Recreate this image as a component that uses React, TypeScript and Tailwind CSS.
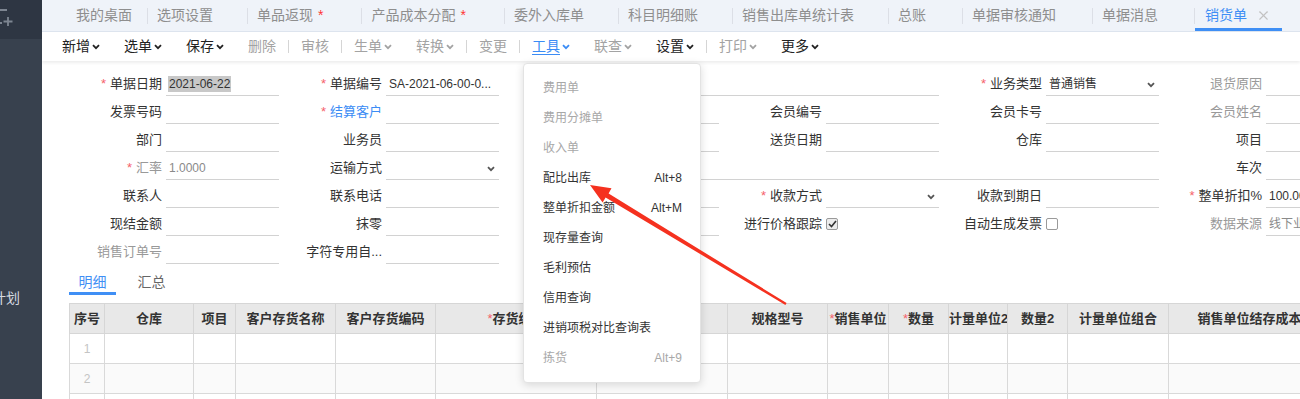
import { X } from 'lucide-react'

type Tab = { name: string; dirty?: boolean }

const tabs: Tab[] = [
  { name: '选项设置' },
  { name: '单品返现', dirty: true },
  { name: '产品成本分配', dirty: true },
  { name: '委外入库单' },
  { name: '科目明细账' },
  { name: '销售出库单统计表' },
  { name: '总账' },
  { name: '单据审核通知' },
  { name: '单据消息' },
]

type Tool = { name: string; tone: 'dark' | 'gray' | 'blue'; menu?: boolean } | 'sep'

const tools: Tool[] = [
  { name: '新增', tone: 'dark', menu: true },
  { name: '选单', tone: 'dark', menu: true },
  { name: '保存', tone: 'dark', menu: true },
  { name: '删除', tone: 'gray' },
  'sep',
  { name: '审核', tone: 'gray' },
  'sep',
  { name: '生单', tone: 'gray', menu: true },
  { name: '转换', tone: 'gray', menu: true },
  'sep',
  { name: '变更', tone: 'gray' },
  'sep',
  { name: '工具', tone: 'blue', menu: true },
  { name: '联查', tone: 'gray', menu: true },
  { name: '设置', tone: 'dark', menu: true },
  'sep',
  { name: '打印', tone: 'gray', menu: true },
  { name: '更多', tone: 'dark', menu: true },
]

type Cell = {
  label?: string
  star?: boolean
  tone?: 'gray' | 'blue'
  value?: string
  valueGray?: boolean
  mark?: boolean
  select?: boolean
  check?: 'on' | 'off'
  span?: 1 | 2 | 3
  blank?: boolean
}

const rows: Cell[][] = [
  [
    { label: '单据日期', star: true, value: '2021-06-22', mark: true },
    { label: '单据编号', star: true, value: 'SA-2021-06-00-0...' },
    { span: 2 },
    { label: '业务类型', star: true, value: '普通销售', select: true },
    { label: '退货原因', tone: 'gray' },
  ],
  [
    { label: '发票号码' },
    { label: '结算客户', star: true, tone: 'blue' },
    {},
    { label: '会员编号' },
    { label: '会员卡号' },
    { label: '会员姓名', tone: 'gray' },
  ],
  [
    { label: '部门' },
    { label: '业务员' },
    {},
    { label: '送货日期' },
    { label: '仓库' },
    { label: '项目' },
  ],
  [
    { label: '汇率', star: true, tone: 'gray', value: '1.0000', valueGray: true },
    { label: '运输方式', select: true },
    { span: 3 },
    { label: '车次' },
  ],
  [
    { label: '联系人' },
    { label: '联系电话' },
    {},
    { label: '收款方式', star: true, select: true },
    { label: '收款到期日' },
    { label: '整单折扣%', star: true, value: '100.00' },
  ],
  [
    { label: '现结金额' },
    { label: '抹零' },
    {},
    { label: '进行价格跟踪', check: 'on' },
    { label: '自动生成发票', check: 'off' },
    { label: '数据来源', tone: 'gray', value: '线下业务', valueGray: true },
  ],
  [{ label: '销售订单号', tone: 'gray' }, { label: '字符专用自...' }, { blank: true }],
]

const cellWidth = { 1: 'w-[220px]', 2: 'w-[440px]', 3: 'w-[660px]' }
const inputWidth = { 1: 'w-[113px]', 2: 'w-[333px]', 3: 'w-[553px]' }

const columns = [
  { w: 'w-[35px]', t: '序号' },
  { w: 'w-[89px]', t: '仓库' },
  { w: 'w-[42px]', t: '项目' },
  { w: 'w-[100px]', t: '客户存货名称' },
  { w: 'w-[100px]', t: '客户存货编码' },
  { w: 'w-[161px]', t: '存货编码', star: true },
  { w: 'w-[131px]', t: '存货名称' },
  { w: 'w-[100px]', t: '规格型号' },
  { w: 'w-[61px]', t: '销售单位', star: true },
  { w: 'w-[60px]', t: '数量', star: true },
  { w: 'w-[59px]', t: '计量单位2' },
  { w: 'w-[60px]', t: '数量2' },
  { w: 'w-[101px]', t: '计量单位组合' },
  { w: 'w-[162px]', t: '销售单位结存成本' },
]

const menu = [
  { t: '费用单', off: true },
  { t: '费用分摊单', off: true },
  { t: '收入单', off: true },
  { t: '配比出库', key: 'Alt+8' },
  { t: '整单折扣金额', key: 'Alt+M' },
  { t: '现存量查询' },
  { t: '毛利预估' },
  { t: '信用查询' },
  { t: '进销项税对比查询表' },
  { t: '拣货', key: 'Alt+9', off: true },
]

function Caret({ className = '' }: { className?: string }) {
  return (
    <svg width="8" height="6" viewBox="0 0 8 6" className={className}>
      <polyline points="1,1.2 4,4.2 7,1.2" fill="none" stroke="currentColor" strokeWidth="1.8" />
    </svg>
  )
}

function Sidebar() {
  return (
    <div className="w-[42px] shrink-0 flex flex-col bg-[#38414e] overflow-hidden">
      <div className="h-[39px] bg-[#2e3643] flex items-start">
        <svg width="22" height="22" viewBox="0 0 22 22" className="-ml-[8px] mt-[7px] text-[#7d8591]">
          <path d="M15 3H4v13h6" fill="none" stroke="currentColor" strokeWidth="1.8" />
          <path d="M16 10v9M11.5 14.5h9" fill="none" stroke="currentColor" strokeWidth="1.8" />
        </svg>
      </div>
      <div className="pt-[249px] -ml-[8px] text-[14px] leading-[20px] text-[#d6dae0] whitespace-nowrap">计划</div>
    </div>
  )
}

function TabBar() {
  return (
    <div className="h-[32px] shrink-0 flex items-stretch pl-[24px] bg-[#eff3f9] border-b border-[#dde4ee] text-[14px] text-[#8e8e8e] whitespace-nowrap">
      <div className="flex items-center pl-[10px] pr-[15px]">我的桌面</div>
      {tabs.map((tab, i) => (
        <div key={tab.name} className="flex items-center">
          <span className="w-px h-[16px] bg-[#dcdfe6]" />
          <span className={`pl-[9px] ${tab.dirty ? 'pr-[38px]' : i > 5 ? 'pr-[36px]' : 'pr-[34px]'}`}>
            {tab.name}
            {tab.dirty && <span className="ml-[5px] text-[#f33]">*</span>}
          </span>
        </div>
      ))}
      <div className="flex items-center">
        <span className="w-px h-[16px] bg-[#dcdfe6]" />
        <span className="h-full flex items-center pl-[10px] pr-[11px] border-b-[3px] border-[#3f8ff5] pt-[3px] text-[#3f8ff5]">
          销货单
          <X size={15} strokeWidth={1.7} className="ml-[9px] text-[#c2c2c2]" />
        </span>
      </div>
    </div>
  )
}

function Toolbar() {
  return (
    <div className="relative z-10 h-[29px] shrink-0 flex items-center pl-[8px] bg-white shadow-[0_2px_3px_rgba(0,0,0,0.07)] text-[14px] whitespace-nowrap">
      {tools.map((tool, i) =>
        tool === 'sep' ? (
          <span key={i} className="w-px h-[13px] bg-[#d5d5d5]" />
        ) : (
          <span
            key={tool.name}
            className={`flex items-center gap-[2px] px-3 ${
              tool.tone === 'dark' ? 'text-[#222]' : tool.tone === 'blue' ? 'text-[#3b8cf5]' : 'text-[#a3a3a3]'
            }`}
          >
            <span className={tool.tone === 'blue' ? 'underline underline-offset-[3px]' : ''}>{tool.name}</span>
            {tool.menu && <Caret />}
          </span>
        ),
      )}
    </div>
  )
}

function Field({ cell }: { cell: Cell }) {
  const span = cell.span ?? 1
  if (cell.blank) return null
  const labelTone = cell.tone === 'gray' ? 'text-[#999]' : cell.tone === 'blue' ? 'text-[#3b8cf5]' : 'text-[#333]'
  return (
    <div className={`flex shrink-0 ${cellWidth[span]}`}>
      <div className={`w-[103px] shrink-0 flex items-end justify-end pb-[4px] text-[13px] leading-[16px] whitespace-nowrap ${labelTone}`}>
        {cell.star && <span className="mr-[4px] text-[#f5626b]">*</span>}
        {cell.label}
      </div>
      {cell.check ? (
        <div className="ml-[4px] flex items-end pb-[6px]">
          <span
            className={`w-[12px] h-[12px] rounded-[2px] border border-[#9a9a9a] flex items-center justify-center ${
              cell.check === 'on' ? 'bg-[#ececec]' : 'bg-white'
            }`}
          >
            {cell.check === 'on' && (
              <svg width="9" height="8" viewBox="0 0 9 8">
                <polyline points="1,4 3.5,6.5 8,1" fill="none" stroke="#333" strokeWidth="1.6" />
              </svg>
            )}
          </span>
        </div>
      ) : (
        <div
          className={`ml-[4px] shrink-0 ${inputWidth[span]} border-b border-[#d2d2d2] flex items-end justify-between pb-[3px] pl-[2px] pr-[4px] text-[12px] leading-[16px] whitespace-nowrap overflow-hidden`}
        >
          <span className={`${cell.mark ? 'bg-[#c8c8c8] px-[1px]' : 'pl-[1px]'} ${cell.valueGray ? 'text-[#8a8a8a]' : 'text-[#333]'}`}>
            {cell.value}
          </span>
          {cell.select && <Caret className="mb-[4px] text-[#555]" />}
        </div>
      )}
    </div>
  )
}

function Form() {
  return (
    <div className="pt-[7px] pl-[17px] shrink-0">
      {rows.map((row, i) => (
        <div key={i} className="flex h-[28px]">
          {row.map((cell, j) => (
            <Field key={j} cell={cell} />
          ))}
        </div>
      ))}
    </div>
  )
}

function DetailTabs() {
  return (
    <div className="h-[31px] shrink-0 flex items-end gap-[12px] pl-[27px] text-[14px] leading-[16px]">
      <span className="w-[47px] text-center pb-[2px] border-b-[3px] border-[#3f8ff5] text-[#3f8ff5]">明细</span>
      <span className="w-[47px] text-center pb-[2px] border-b-[3px] border-transparent text-[#666]">汇总</span>
    </div>
  )
}

function Grid() {
  return (
    <div className="mt-[8px] pl-[27px] overflow-hidden">
      <table className="table-fixed border-collapse w-[1261px] text-[13px]">
        <thead>
          <tr className="h-[30px] bg-[#e8e8e8]">
            {columns.map((c) => (
              <th
                key={c.t}
                className={`${c.w} border border-[#d6d6d6] px-0 font-bold text-[#333] text-center whitespace-nowrap overflow-hidden leading-[16px]`}
              >
                {c.star && <span className="text-[#f5626b] font-normal">*</span>}
                {c.t}
              </th>
            ))}
          </tr>
        </thead>
        <tbody>
          {[1, 2, 3].map((n) => (
            <tr key={n} className={`h-[30px] ${n === 2 ? 'bg-[#fafafa]' : 'bg-white'}`}>
              {columns.map((c, j) => (
                <td key={c.t} className="border border-[#d9d9d9] text-center text-[12px] text-[#c4c4c4]">
                  {j === 0 ? n : ''}
                </td>
              ))}
            </tr>
          ))}
        </tbody>
      </table>
    </div>
  )
}

function ToolsMenu() {
  return (
    <div className="absolute left-[523px] top-[63px] z-20 w-[178px] py-[9px] bg-white border border-[#e3e3e3] rounded-[4px] shadow-[0_2px_8px_rgba(0,0,0,0.14)] text-[12px]">
      {menu.map((m) => (
        <div
          key={m.t}
          className={`h-[30px] flex items-center justify-between pl-[19px] pr-[18px] whitespace-nowrap ${
            m.off ? 'text-[#a8a8a8]' : 'text-[#333]'
          }`}
        >
          <span>{m.t}</span>
          {m.key && <span>{m.key}</span>}
        </div>
      ))}
    </div>
  )
}

function Arrow() {
  return (
    <svg className="absolute inset-0 z-30 pointer-events-none" width="1300" height="399" viewBox="0 0 1300 399">
      <polygon
        points="590,185 611.5,188.2 608.6,193.6 786.6,303 785.4,305 605.6,197.4 602.6,202.6"
        fill="#f5311f"
      />
    </svg>
  )
}

export default function App() {
  return (
    <div className="relative flex w-[1300px] h-[399px] overflow-hidden bg-white font-[family-name:'Liberation_Sans','Noto_Sans_CJK_SC',sans-serif] text-[#333]">
      <Sidebar />
      <div className="flex-1 min-w-0 flex flex-col overflow-hidden">
        <TabBar />
        <Toolbar />
        <Form />
        <DetailTabs />
        <Grid />
      </div>
      <ToolsMenu />
      <Arrow />
    </div>
  )
}
